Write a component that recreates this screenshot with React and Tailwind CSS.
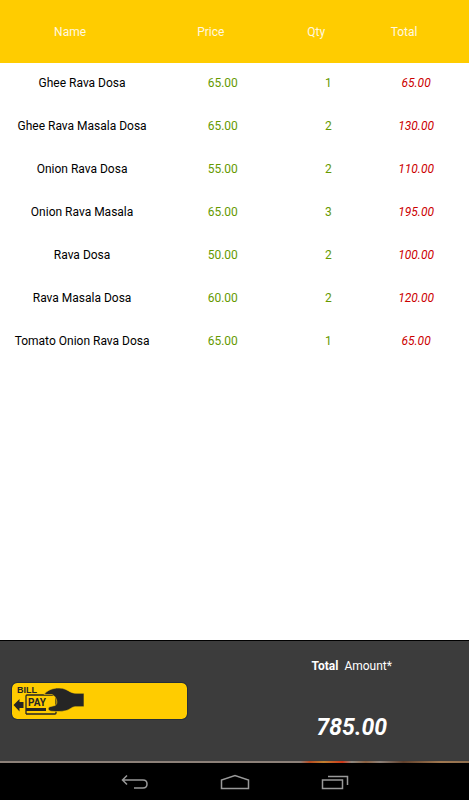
const ITEMS = [
  { name: "Ghee Rava Dosa", price: 65, qty: 1 },
  { name: "Ghee Rava Masala Dosa", price: 65, qty: 2 },
  { name: "Onion Rava Dosa", price: 55, qty: 2 },
  { name: "Onion Rava Masala", price: 65, qty: 3 },
  { name: "Rava Dosa", price: 50, qty: 2 },
  { name: "Rava Masala Dosa", price: 60, qty: 2 },
  { name: "Tomato Onion Rava Dosa", price: 65, qty: 1 },
];

function OrderTable({ items }) {
  return (
    <table className="w-full table-fixed border-collapse text-center text-xs">
      <colgroup>
        <col className="w-[35%]" />
        <col className="w-[25%]" />
        <col className="w-[20%]" />
        <col className="w-[20%]" />
      </colgroup>
      <thead className="bg-[#ffcc00] text-[#fff8e0]">
        <tr className="h-[63px]">
          <th className="pr-6 font-normal">Name</th>
          <th className="pr-6 font-normal">Price</th>
          <th className="pr-6 font-normal">Qty</th>
          <th className="pr-9 font-normal">Total</th>
        </tr>
      </thead>
      <tbody>
        {items.map((item) => (
          <tr key={item.name} className="h-[43px] align-top leading-10">
            <td className="whitespace-nowrap text-black">{item.name}</td>
            <td className="text-[#669900]">{item.price.toFixed(2)}</td>
            <td className="text-[#669900]">{item.qty}</td>
            <td className="pr-3 text-[#cc0000] italic">{(item.price * item.qty).toFixed(2)}</td>
          </tr>
        ))}
      </tbody>
    </table>
  );
}

function BillPayIcon() {
  return (
    <svg
      viewBox="0 0 76 38"
      className="h-[38px] w-[76px] font-['Liberation_Sans',Arial,sans-serif] font-bold"
      fill="#252525"
      aria-hidden="true"
    >
      <text x="5" y="11" fontSize="9">
        BILL
      </text>
      <path d="M1.500 23 7.500 17v3h4v6h-4v3.500Z" />
      <path
        d="M14 32V14q0-1 1-1h27q2 0 2 2v9M14 32h29q1 0 1-1v-3"
        fill="none"
        stroke="#252525"
        strokeWidth="1.3"
      />
      <path d="M14 26h20v3H14z" />
      <text x="16" y="24" fontSize="10" className="font-['Liberation_Sans_Narrow',Roboto,sans-serif]">
        PAY
      </text>
      <path
        d="M32 12.500C35 8.500 40 6 47 6c5 0 8 2 11 3.700 2 1 4 1.600 7 1.600h7v13.400h-9c-3 0-5 3-9 4-4 .9-10 1-14.500.6-4-.5-4.500-4.300-.5-4.900l4-.9c1.500-.6 2.500-3 1.500-5.500-.8-2.500-2-4.500-4.500-5.500Z"
        stroke="#ffcc00"
        strokeWidth=".6"
      />
    </svg>
  );
}

function NavBar() {
  const button = "flex h-9 w-10 items-center justify-center";
  return (
    <nav className="flex h-[37px] shrink-0 items-center justify-center gap-[60px] bg-black text-[#999999]">
      <button type="button" aria-label="Back" className={button}>
        <svg viewBox="0 0 28 16" className="h-4 w-7" fill="none" stroke="currentColor" strokeWidth="1.5">
          <path d="M6 1.500 1.500 6 6 10.500M1.500 6H22c3 0 4 1 4 4s-1 4-4 4h-9" />
        </svg>
      </button>
      <button type="button" aria-label="Home" className={button}>
        <svg viewBox="0 0 30 16" className="h-4 w-[30px]" fill="none" stroke="currentColor" strokeWidth="1.5">
          <path d="M1.500 14.500V6L15 1.500 28.500 6v8.500Z" />
        </svg>
      </button>
      <button type="button" aria-label="Recent apps" className={button}>
        <svg viewBox="0 0 28 16" className="h-4 w-7" fill="none" stroke="currentColor" strokeWidth="1.5">
          <path d="M1.500 6h20v8.500h-20ZM7 2.500h19.500v8.500" />
        </svg>
      </button>
    </nav>
  );
}

export default function App() {
  const total = ITEMS.reduce((sum, item) => sum + item.price * item.qty, 0);

  return (
    <div className="flex min-h-screen flex-col bg-white font-[Roboto,sans-serif]">
      <main className="flex-1">
        <OrderTable items={ITEMS} />
      </main>
      <footer className="grid h-[121px] shrink-0 grid-cols-2 items-center border-t border-black bg-[#3c3c3c] text-white">
        <div className="px-3">
          <button
            type="button"
            aria-label="Bill pay"
            className="flex h-9 w-[175px] items-center rounded-[5px] bg-[#ffcc00] outline outline-[#252f38]"
          >
            <BillPayIcon />
          </button>
        </div>
        <div className="flex flex-col items-center gap-[38px] text-center">
          <p className="text-xs">
            <strong className="font-bold">Total</strong>&nbsp; Amount*
          </p>
          <p className="text-[23px] leading-8 font-bold italic">{total.toFixed(2)}</p>
        </div>
      </footer>
      <div className="h-0.5 shrink-0 bg-[linear-gradient(90deg,#8c8078_0%,#8c8078_64%,#b84a20_66%,#c08030_69%,#d03818_73%,#8c8880_75%,#8c6040_78%,#8c8078_81%,#60402c_86%,#a07850_94%,#907050_100%)]" />
      <NavBar />
    </div>
  );
}
